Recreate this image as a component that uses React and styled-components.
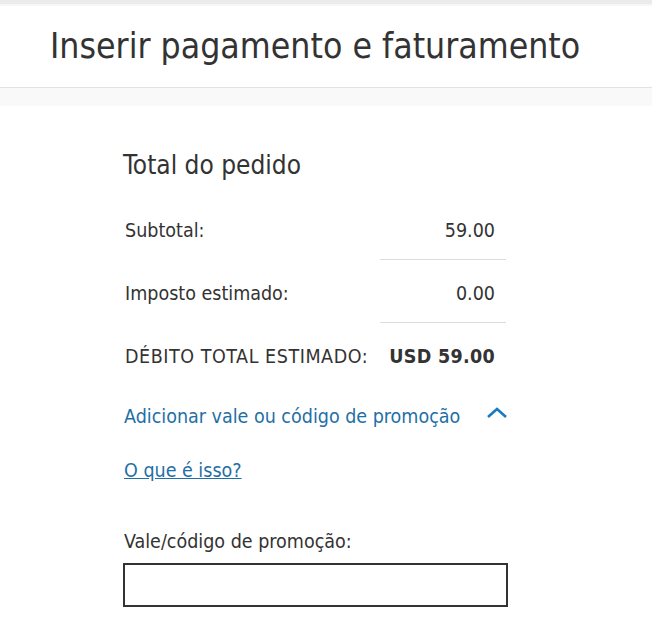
import styled, { createGlobalStyle } from "styled-components";

const GlobalStyle = createGlobalStyle`
  body {
    margin: 0;
    background: #fff;
    font-family: "DejaVu Sans Condensed", "DejaVu Sans", sans-serif;
    color: #333;
  }
`;

const rows = [
  { label: "Subtotal:", value: "59.00" },
  { label: "Imposto estimado:", value: "0.00" },
];

export default function App() {
  return (
    <>
      <GlobalStyle />
      <Header>
        <Title>Inserir pagamento e faturamento</Title>
      </Header>
      <Band />
      <Main>
        <Summary>
          <SummaryTitle>Total do pedido</SummaryTitle>
          <Table>
            {rows.map((r) => (
              <Row key={r.label}>
                <Label>{r.label}</Label>
                <Value $divider>{r.value}</Value>
              </Row>
            ))}
            <Row>
              <Label $caps>DÉBITO TOTAL ESTIMADO:</Label>
              <Value $bold>USD 59.00</Value>
            </Row>
          </Table>
          <Toggle>
            <span>Adicionar vale ou código de promoção</span>
            <svg width="22" height="12" viewBox="0 0 22 12">
              <path
                d="M2 10 L11 2 L20 10"
                fill="none"
                stroke="#1a7bbf"
                strokeWidth="2.6"
              />
            </svg>
          </Toggle>
          <Help href="#">O que é isso?</Help>
          <Field>
            <FieldLabel htmlFor="promo">Vale/código de promoção:</FieldLabel>
            <Input id="promo" type="text" />
          </Field>
        </Summary>
      </Main>
    </>
  );
}

const Header = styled.header`
  border-top: 4px solid #ebebeb;
  box-shadow: inset 0 2px 0 #f6f6f6;
  border-bottom: 1px solid #e2e2e2;
  padding: 0 50px;
  height: 83px;
  display: flex;
  align-items: center;
`;

const Title = styled.h1`
  margin: 0;
  font-weight: 400;
  font-size: 35.3px;
  color: #333;
`;

const Band = styled.div`
  height: 18px;
  background: #f9f9f9;
`;

const Main = styled.main`
  padding: 43px 0 0 123px;
`;

const Summary = styled.section`
  width: 385px;
`;

const SummaryTitle = styled.h2`
  margin: 0 0 16px;
  font-weight: 400;
  font-size: 26px;
  line-height: 32px;
`;

const Table = styled.div`
  display: flex;
  flex-direction: column;
`;

const Row = styled.div`
  display: grid;
  grid-template-columns: 257px 126px;
  font-size: 19.5px;
  line-height: 22px;
`;

const Label = styled.div`
  padding: 23px 0 17px 2px;
  white-space: nowrap;
  letter-spacing: ${(p) => (p.$caps ? "0.55px" : "normal")};
`;

const Value = styled.div`
  padding: 23px 11px 17px 0;
  text-align: right;
  white-space: nowrap;
  font-weight: ${(p) => (p.$bold ? 700 : 400)};
  letter-spacing: ${(p) => (p.$bold ? "0.3px" : "normal")};
  border-bottom: ${(p) => (p.$divider ? "1px solid #dcdcdc" : "none")};
`;

const Toggle = styled.div`
  display: flex;
  justify-content: space-between;
  align-items: center;
  padding: 20px 0 0 1px;
  color: #1f6fa6;
  font-size: 19.5px;
  line-height: 24px;

  svg {
    margin-top: -8px;
  }
`;

const Help = styled.a`
  display: inline-block;
  margin: 30px 0 0 1px;
  color: #1f6fa6;
  font-size: 19.5px;
  line-height: 24px;
  text-decoration: underline;
`;

const Field = styled.div`
  display: flex;
  flex-direction: column;
  margin-top: 48px;
`;

const FieldLabel = styled.label`
  font-size: 19.5px;
  line-height: 22px;
  padding-left: 1px;
  margin-bottom: 10px;
`;

const Input = styled.input`
  box-sizing: border-box;
  width: 385px;
  height: 44px;
  border: 2px solid #333;
  border-radius: 0;
  padding: 0 10px;
  font: inherit;
  font-size: 18px;
`;
